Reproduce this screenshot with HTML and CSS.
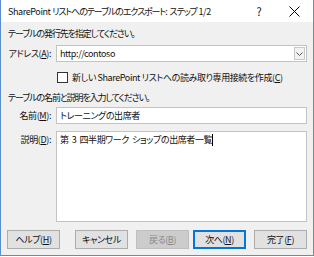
FILE: index.html
```html
<!DOCTYPE html>
<html lang="ja">
<head>
<meta charset="utf-8">
<link rel="stylesheet" href="styles.css">
</head>
<body>
<div class="window">
  <div class="titlebar">
    <div class="title">SharePoint <span class="tight">リストへのテーブルのエクスポート: ステップ</span> 1/2</div>
    <div class="help">?</div>
    <div class="close">
      <svg width="11" height="11" viewBox="0 0 11 11"><path d="M0.5 0.5 L10.5 10.5 M10.5 0.5 L0.5 10.5" stroke="#000" stroke-width="1" fill="none"/></svg>
    </div>
  </div>
  <div class="content">
    <div class="section section1">テーブルの発行先を指定してください。</div>
    <div class="row row-address">
      <div class="label">アドレス(<u>A</u>):</div>
      <div class="combo">
        <span class="value">http://contoso</span>
        <span class="dropbtn"><svg width="7" height="4" viewBox="0 0 7 4"><path d="M0.5 0.5 L3.5 3.5 L6.5 0.5" stroke="#555" fill="none"/></svg></span>
      </div>
    </div>
    <div class="checkrow">
      <span class="checkbox"></span>
      <span class="checktext">新しい SharePoint リストへの読み取り専用接続を作成(<u>C</u>)</span>
    </div>
    <div class="section section2">テーブルの名前と説明を入力してください。</div>
    <div class="row row-name">
      <div class="label">名前(<u>M</u>):</div>
      <div class="textbox"><span class="value">トレーニングの出席者</span></div>
    </div>
    <div class="row row-desc">
      <div class="label">説明(<u>D</u>):</div>
      <div class="textarea"><span class="value desc">第 3 四半期ワーク ショップの出席者一覧</span><span class="caret"></span></div>
    </div>
    <div class="buttons">
      <div class="btn btn-help">ヘルプ(<u>H</u>)</div>
      <div class="btn btn-cancel">キャンセル</div>
      <div class="btn btn-back disabled">戻る(<u>B</u>)</div>
      <div class="btn btn-next default">次へ(<u>N</u>)</div>
      <div class="btn btn-finish">完了(<u>F</u>)</div>
    </div>
  </div>
</div>
</body>
</html>
```
FILE: styles.css
```css
html, body {
  margin: 0;
  padding: 0;
  background: #ffffff;
}
body {
  font-family: "Noto Sans CJK JP", "Noto Sans", sans-serif;
  font-size: 9px;
  letter-spacing: -0.4px;
  color: #111;
  font-feature-settings: "palt";
}
u { text-decoration: underline; text-underline-offset: 1px; }
.window {
  width: 314px;
  height: 256px;
  box-sizing: border-box;
  border: 1px solid #5b8fc9;
  border-top: none;
  background: #f0f0f0;
  display: flex;
  flex-direction: column;
}
.titlebar {
  height: 22px;
  background: #ffffff;
  display: flex;
  align-items: center;
  flex-shrink: 0;
}
.title {
  padding-left: 7px;
  flex: 1;
  white-space: nowrap;
}
.tight { letter-spacing: -1.1px; word-spacing: 2px; }
.help {
  width: 16px;
  text-align: center;
  margin-right: 22px;
  font-size: 11px;
}
.close {
  width: 12px;
  margin-right: 12px;
  display: flex;
  align-items: center;
}
.content {
  flex: 1;
  display: flex;
  flex-direction: column;
  padding: 0 6px 0 6px;
}
.section {
  height: 16px;
  line-height: 16px;
  white-space: nowrap;
  letter-spacing: -1.1px;
  padding-left: 1px;
}
.section1 { margin-top: 4px; }
.section2 { margin-top: 2px; }
.row {
  display: flex;
  align-items: flex-start;
}
.label {
  width: 44px;
  text-align: right;
  white-space: nowrap;
  margin-right: 5px;
  height: 17px;
  line-height: 17px;
  flex-shrink: 0;
}
.row-address { margin-top: 3px; }
.row-name { margin-top: 1px; }
.row-desc { margin-top: 7px; }
.combo, .textbox {
  flex: 1;
  height: 17px;
  box-sizing: border-box;
  border: 1px solid #c3c3c3;
  background: #fff;
  display: flex;
  align-items: center;
  padding-left: 3px;
}
.value { flex: 1; white-space: nowrap; }
.dropbtn {
  width: 11px;
  height: 13px;
  box-sizing: border-box;
  border: 1px solid #c8c8c8;
  background: #f2f2f2;
  display: flex;
  align-items: center;
  justify-content: center;
  margin-right: 1px;
}
.checkrow {
  display: flex;
  align-items: center;
  height: 22px;
  padding-left: 50px;
  margin-top: 4px;
}
.checkbox {
  width: 11px;
  height: 11px;
  box-sizing: border-box;
  border: 1px solid #333;
  background: #fff;
  margin-right: 4px;
  flex-shrink: 0;
}
.checktext { white-space: nowrap; }
.textarea {
  flex: 1;
  height: 91px;
  box-sizing: border-box;
  border: 1px solid #c3c3c3;
  background: #fff;
  padding: 1px 3px;
  display: flex;
  align-items: flex-start;
  line-height: 14px;
}
.textarea .value { flex: none; }
.desc { word-spacing: 1.5px; }
.caret {
  display: inline-block;
  width: 1px;
  height: 12px;
  background: #000;
  margin-top: 1px;
}
.buttons {
  display: flex;
  margin-top: 8px;
}
.btn {
  width: 53px;
  height: 19px;
  box-sizing: border-box;
  border: 1px solid #adadad;
  background: #e1e1e1;
  display: flex;
  align-items: center;
  justify-content: center;
  white-space: nowrap;
}
.btn-cancel { margin-left: 15px; }
.btn-back { margin-left: 8px; }
.btn-next { margin-left: 4px; }
.btn-finish { margin-left: 8px; }
.disabled {
  background: #cccccc;
  border-color: #bfbfbf;
  color: #8a8a8a;
}
.default {
  border: 2px solid #0078d7;
}
```
